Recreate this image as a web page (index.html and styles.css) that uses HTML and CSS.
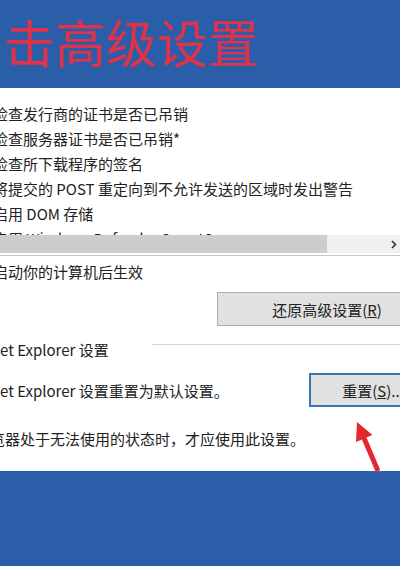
FILE: index.html
```html
<!DOCTYPE html>
<html lang="zh-CN">
<head>
<meta charset="utf-8">
<title>高级设置</title>
<link rel="stylesheet" href="styles.css">
</head>
<body>
<header class="banner">
  <h1 class="title">击高级设置</h1>
</header>
<main class="panel">
  <div class="listbox">
    <ul class="list">
      <li>检查发行商的证书是否已吊销</li>
      <li>检查服务器证书是否已吊销*</li>
      <li>检查所下载程序的签名</li>
      <li>将提交的 POST 重定向到不允许发送的区域时发出警告</li>
      <li>启用 DOM 存储</li>
      <li>启用 Windows Defender SmartScreen</li>
    </ul>
    <div class="hscroll">
      <div class="thumb"></div>
      <div class="track">
        <svg class="chev" width="6" height="9" viewBox="0 0 6 9"><polyline points="1,1 4.5,4.5 1,8" fill="none" stroke="#333" stroke-width="1.6"/></svg>
      </div>
    </div>
  </div>
  <p class="note">启动你的计算机后生效</p>
  <div class="btn-row">
    <button class="btn">还原高级设置(<u>R</u>)</button>
  </div>
  <div class="group-head">
    <span class="group-title">et Explorer 设置</span>
    <span class="rule"></span>
  </div>
  <div class="reset-row">
    <span class="reset-text">et Explorer 设置重置为默认设置。</span>
    <button class="btn btn-reset">重置(<u>S</u>)...</button>
  </div>
  <p class="warn">览器处于无法使用的状态时，才应使用此设置。</p>
</main>
<svg class="pointer" width="400" height="566" viewBox="0 0 400 566">
  <polygon points="357,422 372.4,434.9 366.5,437.5 380.3,470 375.7,472 361.9,439.5 356,442.1" fill="#e8262e"/>
</svg>
</body>
</html>
```

FILE: styles.css
```css
html, body {
  margin: 0;
  padding: 0;
}
body {
  width: 400px;
  height: 566px;
  overflow: hidden;
  position: relative;
  background: #2a5ea8;
  font-family: "Noto Sans CJK SC", "Noto Sans", sans-serif;
}
.banner {
  height: 88px;
  box-sizing: border-box;
  padding: 16px 0 0 4px;
}
.title {
  margin: 0;
  font-size: 51px;
  line-height: 51px;
  font-weight: normal;
  color: #e0324a;
  white-space: nowrap;
}
.panel {
  height: 383px;
  background: #ffffff;
  overflow: hidden;
  color: #222222;
  font-size: 15px;
}
.listbox {
  border-bottom: 1px solid #c6c6c6;
  padding-bottom: 2px;
}
.list {
  list-style: none;
  margin: 0;
  padding: 13px 0 0;
  height: 134px;
  overflow: hidden;
}
.list li {
  line-height: 25px;
  margin-left: -7px;
  white-space: nowrap;
}
.hscroll {
  display: flex;
  height: 18px;
}
.thumb {
  width: 327px;
  background: #cdcdcd;
}
.track {
  flex: 1;
  background: #f0f0f0;
  display: flex;
  align-items: center;
  justify-content: flex-end;
  padding-right: 3px;
}
.chev {
  display: block;
}
.note {
  margin: 3px 0 0 -7px;
  line-height: 25px;
  white-space: nowrap;
}
.btn-row {
  display: flex;
  margin-top: 8px;
  padding-left: 217px;
}
.btn {
  flex-shrink: 0;
  width: 220px;
  height: 34px;
  box-sizing: border-box;
  padding: 0;
  background: #e1e1e1;
  border: 1px solid #adadad;
  color: #222222;
  font: inherit;
  font-size: 15px;
  white-space: nowrap;
}
.group-head {
  display: flex;
  margin-top: 11px;
  line-height: 25px;
}
.group-title {
  width: 152px;
  flex-shrink: 0;
  white-space: nowrap;
}
.rule {
  flex: 1;
  height: 1px;
  margin-top: 7px;
  background: #d2d2d2;
}
.reset-row {
  display: flex;
  align-items: center;
  margin-top: 11px;
}
.reset-text {
  width: 309px;
  flex-shrink: 0;
  white-space: nowrap;
}
.btn-reset {
  width: 128px;
  border: 2px solid #3a74b2;
}
.warn {
  margin: 19px 0 0 -10px;
  line-height: 25px;
  white-space: nowrap;
}
.pointer {
  position: absolute;
  left: 0;
  top: 0;
  pointer-events: none;
}
```
